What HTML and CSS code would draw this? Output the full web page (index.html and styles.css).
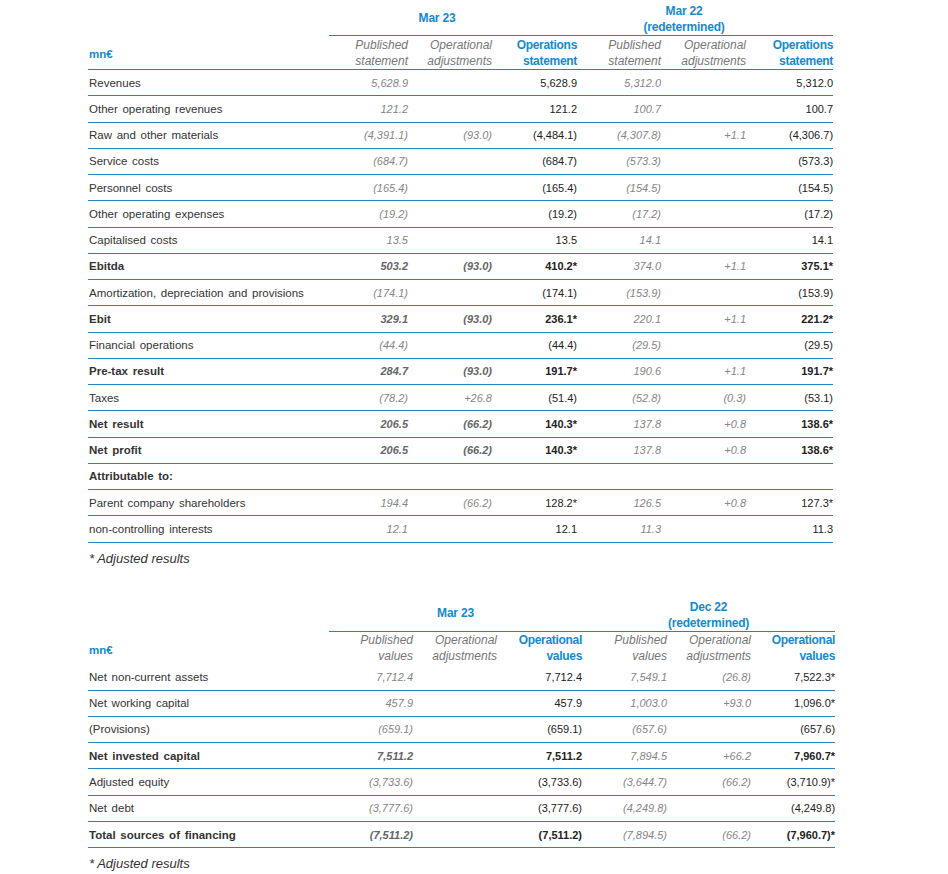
FILE: index.html
```html
<!DOCTYPE html>
<html lang="en">
<head>
<meta charset="utf-8">
<title>Operations statement</title>
<link rel="stylesheet" href="styles.css">
</head>
<body>
<main class="page">
  <section class="block">
    <table class="fin fin-income">
      <colgroup>
        <col class="c-label"><col class="c1"><col class="c2"><col class="c3"><col class="c4"><col class="c5"><col class="c6">
      </colgroup>
      <thead>
        <tr class="group-row">
          <th class="empty"></th>
          <th colspan="3" class="group g-left"><span>Mar 23</span></th>
          <th colspan="3" class="group g-right"><span>Mar 22<br>(redetermined)</span></th>
        </tr>
        <tr class="col-row">
          <th class="unit">mn€</th>
          <th class="sub">Published<br>statement</th>
          <th class="sub">Operational<br>adjustments</th>
          <th class="sub main">Operations<br>statement</th>
          <th class="sub">Published<br>statement</th>
          <th class="sub">Operational<br>adjustments</th>
          <th class="sub main">Operations<br>statement</th>
        </tr>
      </thead>
      <tbody>
        <tr><td class="lbl">Revenues</td><td class="pub">5,628.9</td><td class="adj"></td><td class="op">5,628.9</td><td class="pub">5,312.0</td><td class="adj"></td><td class="op">5,312.0</td></tr>
        <tr><td class="lbl">Other operating revenues</td><td class="pub">121.2</td><td class="adj"></td><td class="op">121.2</td><td class="pub">100.7</td><td class="adj"></td><td class="op">100.7</td></tr>
        <tr><td class="lbl">Raw and other materials</td><td class="pub">(4,391.1)</td><td class="adj">(93.0)</td><td class="op">(4,484.1)</td><td class="pub">(4,307.8)</td><td class="adj">+1.1</td><td class="op">(4,306.7)</td></tr>
        <tr><td class="lbl">Service costs</td><td class="pub">(684.7)</td><td class="adj"></td><td class="op">(684.7)</td><td class="pub">(573.3)</td><td class="adj"></td><td class="op">(573.3)</td></tr>
        <tr><td class="lbl">Personnel costs</td><td class="pub">(165.4)</td><td class="adj"></td><td class="op">(165.4)</td><td class="pub">(154.5)</td><td class="adj"></td><td class="op">(154.5)</td></tr>
        <tr><td class="lbl">Other operating expenses</td><td class="pub">(19.2)</td><td class="adj"></td><td class="op">(19.2)</td><td class="pub">(17.2)</td><td class="adj"></td><td class="op">(17.2)</td></tr>
        <tr><td class="lbl">Capitalised costs</td><td class="pub">13.5</td><td class="adj"></td><td class="op">13.5</td><td class="pub">14.1</td><td class="adj"></td><td class="op">14.1</td></tr>
        <tr class="total"><td class="lbl">Ebitda</td><td class="pub cur">503.2</td><td class="adj cur">(93.0)</td><td class="op">410.2*</td><td class="pub">374.0</td><td class="adj">+1.1</td><td class="op">375.1*</td></tr>
        <tr><td class="lbl">Amortization, depreciation and provisions</td><td class="pub">(174.1)</td><td class="adj"></td><td class="op">(174.1)</td><td class="pub">(153.9)</td><td class="adj"></td><td class="op">(153.9)</td></tr>
        <tr class="total"><td class="lbl">Ebit</td><td class="pub cur">329.1</td><td class="adj cur">(93.0)</td><td class="op">236.1*</td><td class="pub">220.1</td><td class="adj">+1.1</td><td class="op">221.2*</td></tr>
        <tr><td class="lbl">Financial operations</td><td class="pub">(44.4)</td><td class="adj"></td><td class="op">(44.4)</td><td class="pub">(29.5)</td><td class="adj"></td><td class="op">(29.5)</td></tr>
        <tr class="total"><td class="lbl">Pre-tax result</td><td class="pub cur">284.7</td><td class="adj cur">(93.0)</td><td class="op">191.7*</td><td class="pub">190.6</td><td class="adj">+1.1</td><td class="op">191.7*</td></tr>
        <tr><td class="lbl">Taxes</td><td class="pub">(78.2)</td><td class="adj">+26.8</td><td class="op">(51.4)</td><td class="pub">(52.8)</td><td class="adj">(0.3)</td><td class="op">(53.1)</td></tr>
        <tr class="total"><td class="lbl">Net result</td><td class="pub cur">206.5</td><td class="adj cur">(66.2)</td><td class="op">140.3*</td><td class="pub">137.8</td><td class="adj">+0.8</td><td class="op">138.6*</td></tr>
        <tr class="total"><td class="lbl">Net profit</td><td class="pub cur">206.5</td><td class="adj cur">(66.2)</td><td class="op">140.3*</td><td class="pub">137.8</td><td class="adj">+0.8</td><td class="op">138.6*</td></tr>
        <tr class="total"><td class="lbl">Attributable to:</td><td class="pub"></td><td class="adj"></td><td class="op"></td><td class="pub"></td><td class="adj"></td><td class="op"></td></tr>
        <tr><td class="lbl">Parent company shareholders</td><td class="pub">194.4</td><td class="adj">(66.2)</td><td class="op">128.2*</td><td class="pub">126.5</td><td class="adj">+0.8</td><td class="op">127.3*</td></tr>
        <tr><td class="lbl">non-controlling interests</td><td class="pub">12.1</td><td class="adj"></td><td class="op">12.1</td><td class="pub">11.3</td><td class="adj"></td><td class="op">11.3</td></tr>
      </tbody>
    </table>
    <p class="note">* Adjusted results</p>
  </section>

  <section class="block block-second">
    <table class="fin fin-balance">
      <colgroup>
        <col class="c-label"><col class="d1"><col class="d2"><col class="d3"><col class="d4"><col class="d5"><col class="d6">
      </colgroup>
      <thead>
        <tr class="group-row">
          <th class="empty"></th>
          <th colspan="3" class="group"><span>Mar 23</span></th>
          <th colspan="3" class="group"><span>Dec 22<br>(redetermined)</span></th>
        </tr>
        <tr class="col-row no-line">
          <th class="unit">mn€</th>
          <th class="sub">Published<br>values</th>
          <th class="sub">Operational<br>adjustments</th>
          <th class="sub main">Operational<br>values</th>
          <th class="sub">Published<br>values</th>
          <th class="sub">Operational<br>adjustments</th>
          <th class="sub main">Operational<br>values</th>
        </tr>
      </thead>
      <tbody>
        <tr class="first"><td class="lbl">Net non-current assets</td><td class="pub">7,712.4</td><td class="adj"></td><td class="op">7,712.4</td><td class="pub">7,549.1</td><td class="adj">(26.8)</td><td class="op">7,522.3*</td></tr>
        <tr><td class="lbl">Net working capital</td><td class="pub">457.9</td><td class="adj"></td><td class="op">457.9</td><td class="pub">1,003.0</td><td class="adj">+93.0</td><td class="op">1,096.0*</td></tr>
        <tr><td class="lbl">(Provisions)</td><td class="pub">(659.1)</td><td class="adj"></td><td class="op">(659.1)</td><td class="pub">(657.6)</td><td class="adj"></td><td class="op">(657.6)</td></tr>
        <tr class="total"><td class="lbl">Net invested capital</td><td class="pub cur">7,511.2</td><td class="adj"></td><td class="op">7,511.2</td><td class="pub">7,894.5</td><td class="adj">+66.2</td><td class="op">7,960.7*</td></tr>
        <tr><td class="lbl">Adjusted equity</td><td class="pub">(3,733.6)</td><td class="adj"></td><td class="op">(3,733.6)</td><td class="pub">(3,644.7)</td><td class="adj">(66.2)</td><td class="op">(3,710.9)*</td></tr>
        <tr><td class="lbl">Net debt</td><td class="pub">(3,777.6)</td><td class="adj"></td><td class="op">(3,777.6)</td><td class="pub">(4,249.8)</td><td class="adj"></td><td class="op">(4,249.8)</td></tr>
        <tr class="total last"><td class="lbl">Total sources of financing</td><td class="pub cur">(7,511.2)</td><td class="adj"></td><td class="op">(7,511.2)</td><td class="pub">(7,894.5)</td><td class="adj">(66.2)</td><td class="op">(7,960.7)*</td></tr>
      </tbody>
    </table>
    <p class="note">* Adjusted results</p>
  </section>
</main>
</body>
</html>
```

FILE: styles.css
```css
html, body {
  margin: 0;
  padding: 0;
  background: #ffffff;
}

body {
  font-family: "Liberation Sans", Arial, sans-serif;
  color: #333333;
}

.page {
  padding: 0 0 0 88px;
  width: 760px;
}

.block-second {
  margin-top: 29px;
}

.fin {
  border-collapse: separate;
  border-spacing: 0;
  table-layout: fixed;
}

.fin-income { width: 745px; }
.fin-balance { width: 747px; }

.c-label { width: 241px; }
.c1 { width: 79px; }
.c2 { width: 84px; }
.c3 { width: 85px; }
.c4 { width: 84px; }
.c5 { width: 85px; }
.c6 { width: 87px; }

.d1 { width: 84px; }
.d2 { width: 84px; }
.d3 { width: 85px; }
.d4 { width: 85px; }
.d5 { width: 84px; }
.d6 { width: 84px; }

.fin th,
.fin td {
  box-sizing: border-box;
  padding: 0;
  white-space: nowrap;
}

/* group header row */
.group-row th {
  height: 36px;
  vertical-align: bottom;
  padding-bottom: 0;
}

.group {
  border-bottom: 1px solid #2383c5;
  color: #1589d0;
  font-weight: bold;
  font-size: 12px;
  line-height: 16px;
  text-align: center;
  letter-spacing: -0.2px;
}

.fin-income .g-left {
  vertical-align: middle;
  padding-right: 32px;
}

.fin-income .g-right {
  padding-right: 42px;
}

.fin-balance .group {
  vertical-align: bottom;
}

.fin-balance .group-row th:nth-child(2) {
  vertical-align: middle;
}

/* column header row */
.col-row th {
  height: 34px;
  border-bottom: 1px solid #2383c5;
  vertical-align: middle;
  font-size: 12px;
  line-height: 16px;
  text-align: right;
}

.col-row.no-line th {
  height: 33px;
  border-bottom: 0;
}

.unit {
  text-align: left !important;
  color: #1589d0;
  font-weight: bold;
  font-size: 11.5px !important;
  padding-left: 1px !important;
  padding-top: 3px !important;
}

.sub {
  font-style: italic;
  font-weight: normal;
  color: #767676;
}

.sub.main {
  font-style: normal;
  font-weight: bold;
  color: #1589d0;
  letter-spacing: -0.3px;
}

/* body rows */
.fin td {
  height: 26.25px;
  border-bottom: 1px solid #2383c5;
  vertical-align: middle;
  font-size: 11px;
  line-height: 14px;
  text-align: right;
}

.fin-balance td {
  height: 26.33px;
}

.fin-balance tr.first td {
  height: 26px;
}

.fin td.lbl {
  text-align: left;
  padding-left: 1px;
  font-size: 11.5px;
  color: #333333;
  word-spacing: 1.5px;
}

.fin td.pub,
.fin td.adj {
  font-style: italic;
  color: #858585;
}

.fin td.op {
  color: #222222;
}

.fin tr.total td.lbl,
.fin tr.total td.op {
  font-weight: bold;
}

.fin tr.total td.cur {
  font-weight: bold;
  color: #666666;
}

.note {
  margin: 8px 0 0 1px;
  font-size: 13px;
  line-height: 16px;
  font-style: italic;
  color: #333333;
}
```
